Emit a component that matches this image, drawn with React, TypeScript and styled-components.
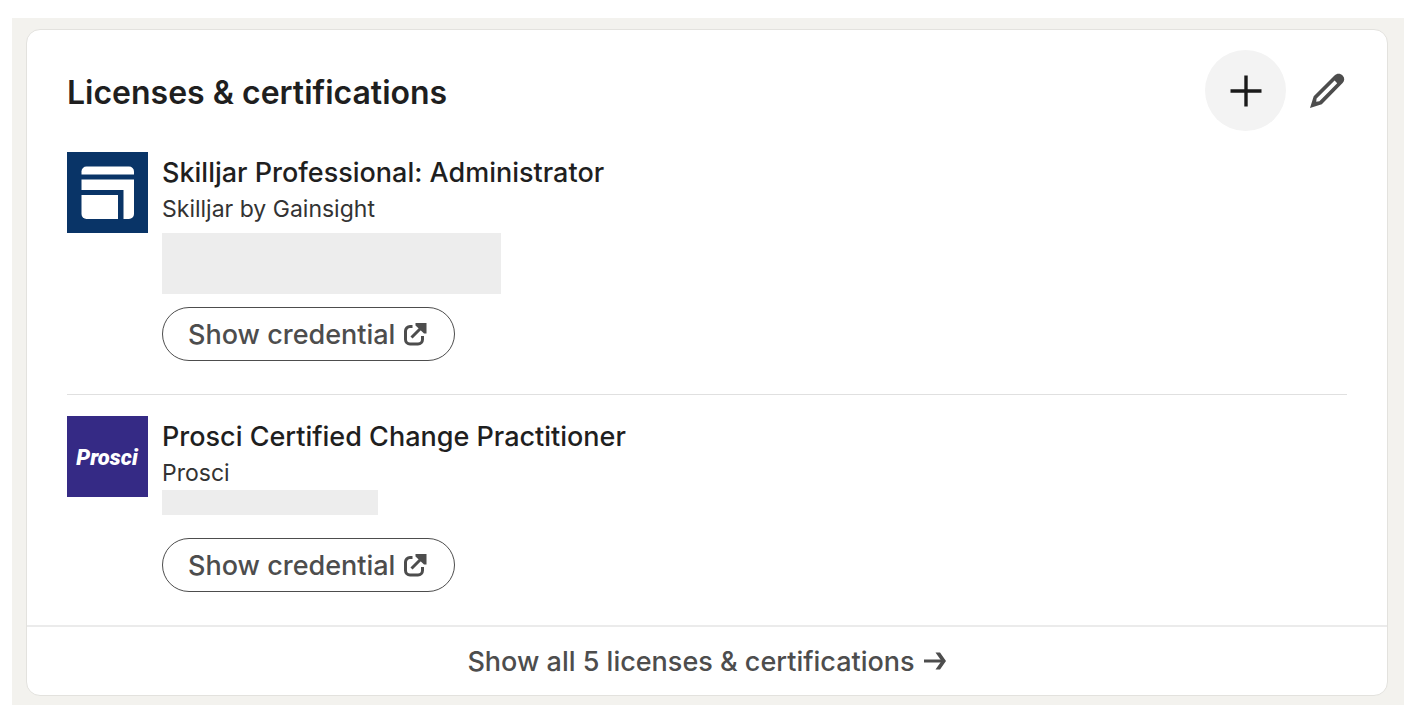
import React from "react";
import styled, { createGlobalStyle } from "styled-components";

const GlobalStyle = createGlobalStyle`
  *, *::before, *::after { box-sizing: border-box; }
  body {
    margin: 0;
    background: #fff;
    color: #1f1f1f;
    font-family: Inter, "Liberation Sans", sans-serif;
  }
  h2, h3, p, ul { margin: 0; padding: 0; }
`;

const Page = styled.main`
  padding: 18px 18px 15px 12px;
`;

const Backdrop = styled.div`
  padding: 11px 16px 9px 14px;
  background: #f3f2ee;
`;

const Card = styled.section`
  overflow: hidden;
  border: 1px solid #e3e2de;
  border-radius: 14px;
  background: #fff;
`;

const Header = styled.header`
  display: flex;
  align-items: center;
  justify-content: space-between;
  padding: 20px 20px 0 40px;
`;

const Title = styled.h2`
  padding-top: 4px;
  font-size: 32px;
  font-weight: 600;
  line-height: 40px;
`;

const Actions = styled.div`
  display: flex;
`;

const IconButton = styled.button<{ $active?: boolean }>`
  display: grid;
  place-items: center;
  width: 81px;
  height: 81px;
  padding: 0;
  border: 0;
  border-radius: 50%;
  background: ${(p) => (p.$active ? "#f3f3f3" : "transparent")};
  color: ${(p) => (p.$active ? "#1a1a1a" : "#4d4d4d")};
  cursor: pointer;
`;

const List = styled.ul`
  padding: 0 40px;
  list-style: none;
`;

const Item = styled.li`
  display: flex;
  gap: 14px;
  padding: 21px 0 33px;

  & + & {
    border-top: 1px solid #e0e0e0;
  }
`;

const Logo = styled.svg`
  flex: none;
  width: 81px;
  height: 81px;
`;

const Details = styled.div`
  display: flex;
  flex-direction: column;
  align-items: flex-start;
`;

const Name = styled.h3`
  padding-top: 4px;
  font-size: 27px;
  font-weight: 500;
  line-height: 34px;
`;

const Issuer = styled.p`
  font-size: 23px;
  line-height: 38px;
  color: #333;
`;

const Redacted = styled.div<{ $size: "large" | "small" }>`
  width: ${(p) => (p.$size === "large" ? 339 : 216)}px;
  height: ${(p) => (p.$size === "large" ? 61 : 25)}px;
  margin: ${(p) => (p.$size === "large" ? "5px 0 13px" : "-2px 0 23px")};
  background: #ededed;
`;

const CredentialLink = styled.a`
  display: flex;
  align-items: center;
  gap: 8px;
  height: 54px;
  padding: 0 27px 0 25px;
  border: 1px solid #4d4d4d;
  border-radius: 27px;
  color: #4d4d4d;
  font-size: 27px;
  font-weight: 500;
  text-decoration: none;
`;

const Footer = styled.a`
  display: flex;
  align-items: center;
  justify-content: center;
  gap: 8px;
  height: 70px;
  border-top: 2px solid #ebebeb;
  color: #4d4d4d;
  font-size: 27px;
  font-weight: 500;
  text-decoration: none;
`;

const PlusIcon = () => (
  <svg width="32" height="32" viewBox="0 0 32 32" fill="none" stroke="currentColor" strokeWidth="3.4" aria-hidden="true">
    <path d="M16 .5v31M.5 16h31" />
  </svg>
);

const PencilIcon = () => (
  <svg width="36" height="36" viewBox="0 0 36 36" aria-hidden="true">
    <path
      fill="currentColor"
      fillRule="evenodd"
      d="M1 35 4.7 23.200 25.500 2.400C28 0 31.500.3 33.600 2.400c2.200 2.200 2.200 5.400 0 7.700L12.800 31.300ZM7.600 25.400 7.200 28.800l3.200-.5L28.200 10.200l-2.600-2.700Z"
    />
  </svg>
);

const ExternalIcon = () => (
  <svg width="24" height="24" viewBox="0 0 24 24" fill="none" stroke="currentColor" strokeWidth="3" aria-hidden="true">
    <path d="M9.500 4.500H7A4.500 4.500 0 0 0 2.500 9v8.500A4.500 4.500 0 0 0 7 22h8a4.500 4.500 0 0 0 4.500-4.500V14M8.500 15.500 19 5" />
    <path d="M12.500 1H23.500v10.500H21L12.500 3.500Z" fill="currentColor" stroke="none" />
  </svg>
);

const ArrowIcon = () => (
  <svg width="24" height="24" viewBox="0 0 24 24" fill="none" stroke="currentColor" strokeWidth="3" aria-hidden="true">
    <path d="M1 12h20" />
    <path d="M12.500 3.500h4.500L23 12l-6 8.500h-4.500L18.500 12Z" fill="currentColor" stroke="none" />
  </svg>
);

const SkilljarLogo = () => (
  <Logo viewBox="0 0 81 81" role="img" aria-label="Skilljar logo">
    <path fill="#093467" d="M0 0h81v81H0z" />
    <g fill="#fff">
      <path d="M14.500 22.500v-3a5 5 0 0 1 5-5H62a5 5 0 0 1 5 5v3z" />
      <path d="M14.500 27.500H67V62a5 5 0 0 1-5 5h-5.500V38h-42z" />
      <path d="M14.500 43H51v24H19.500a5 5 0 0 1-5-5z" />
    </g>
  </Logo>
);

const ProsciLogo = () => (
  <Logo viewBox="0 0 81 81" role="img" aria-label="Prosci logo">
    <path fill="#352a85" d="M0 0h81v81H0z" />
    <text
      x="40"
      y="49"
      textAnchor="middle"
      fill="#fff"
      fontFamily='Roboto, "Liberation Sans", sans-serif'
      fontSize="22"
      fontStyle="italic"
      fontWeight="900"
    >
      Prosci
    </text>
  </Logo>
);

type Certification = {
  name: string;
  issuer: string;
  logo: React.ReactNode;
  redacted: "large" | "small";
};

const certifications: Certification[] = [
  {
    name: "Skilljar Professional: Administrator",
    issuer: "Skilljar by Gainsight",
    logo: <SkilljarLogo />,
    redacted: "large",
  },
  {
    name: "Prosci Certified Change Practitioner",
    issuer: "Prosci",
    logo: <ProsciLogo />,
    redacted: "small",
  },
];

export default function App() {
  return (
    <>
      <GlobalStyle />
      <Page>
        <Backdrop>
          <Card>
            <Header>
              <Title>Licenses &amp; certifications</Title>
              <Actions>
                <IconButton $active type="button" aria-label="Add certification">
                  <PlusIcon />
                </IconButton>
                <IconButton type="button" aria-label="Edit certifications">
                  <PencilIcon />
                </IconButton>
              </Actions>
            </Header>
            <List>
              {certifications.map((c) => (
                <Item key={c.name}>
                  {c.logo}
                  <Details>
                    <Name>{c.name}</Name>
                    <Issuer>{c.issuer}</Issuer>
                    <Redacted $size={c.redacted} />
                    <CredentialLink href="#credential">
                      Show credential
                      <ExternalIcon />
                    </CredentialLink>
                  </Details>
                </Item>
              ))}
            </List>
            <Footer href="#all">
              Show all 5 licenses &amp; certifications
              <ArrowIcon />
            </Footer>
          </Card>
        </Backdrop>
      </Page>
    </>
  );
}
